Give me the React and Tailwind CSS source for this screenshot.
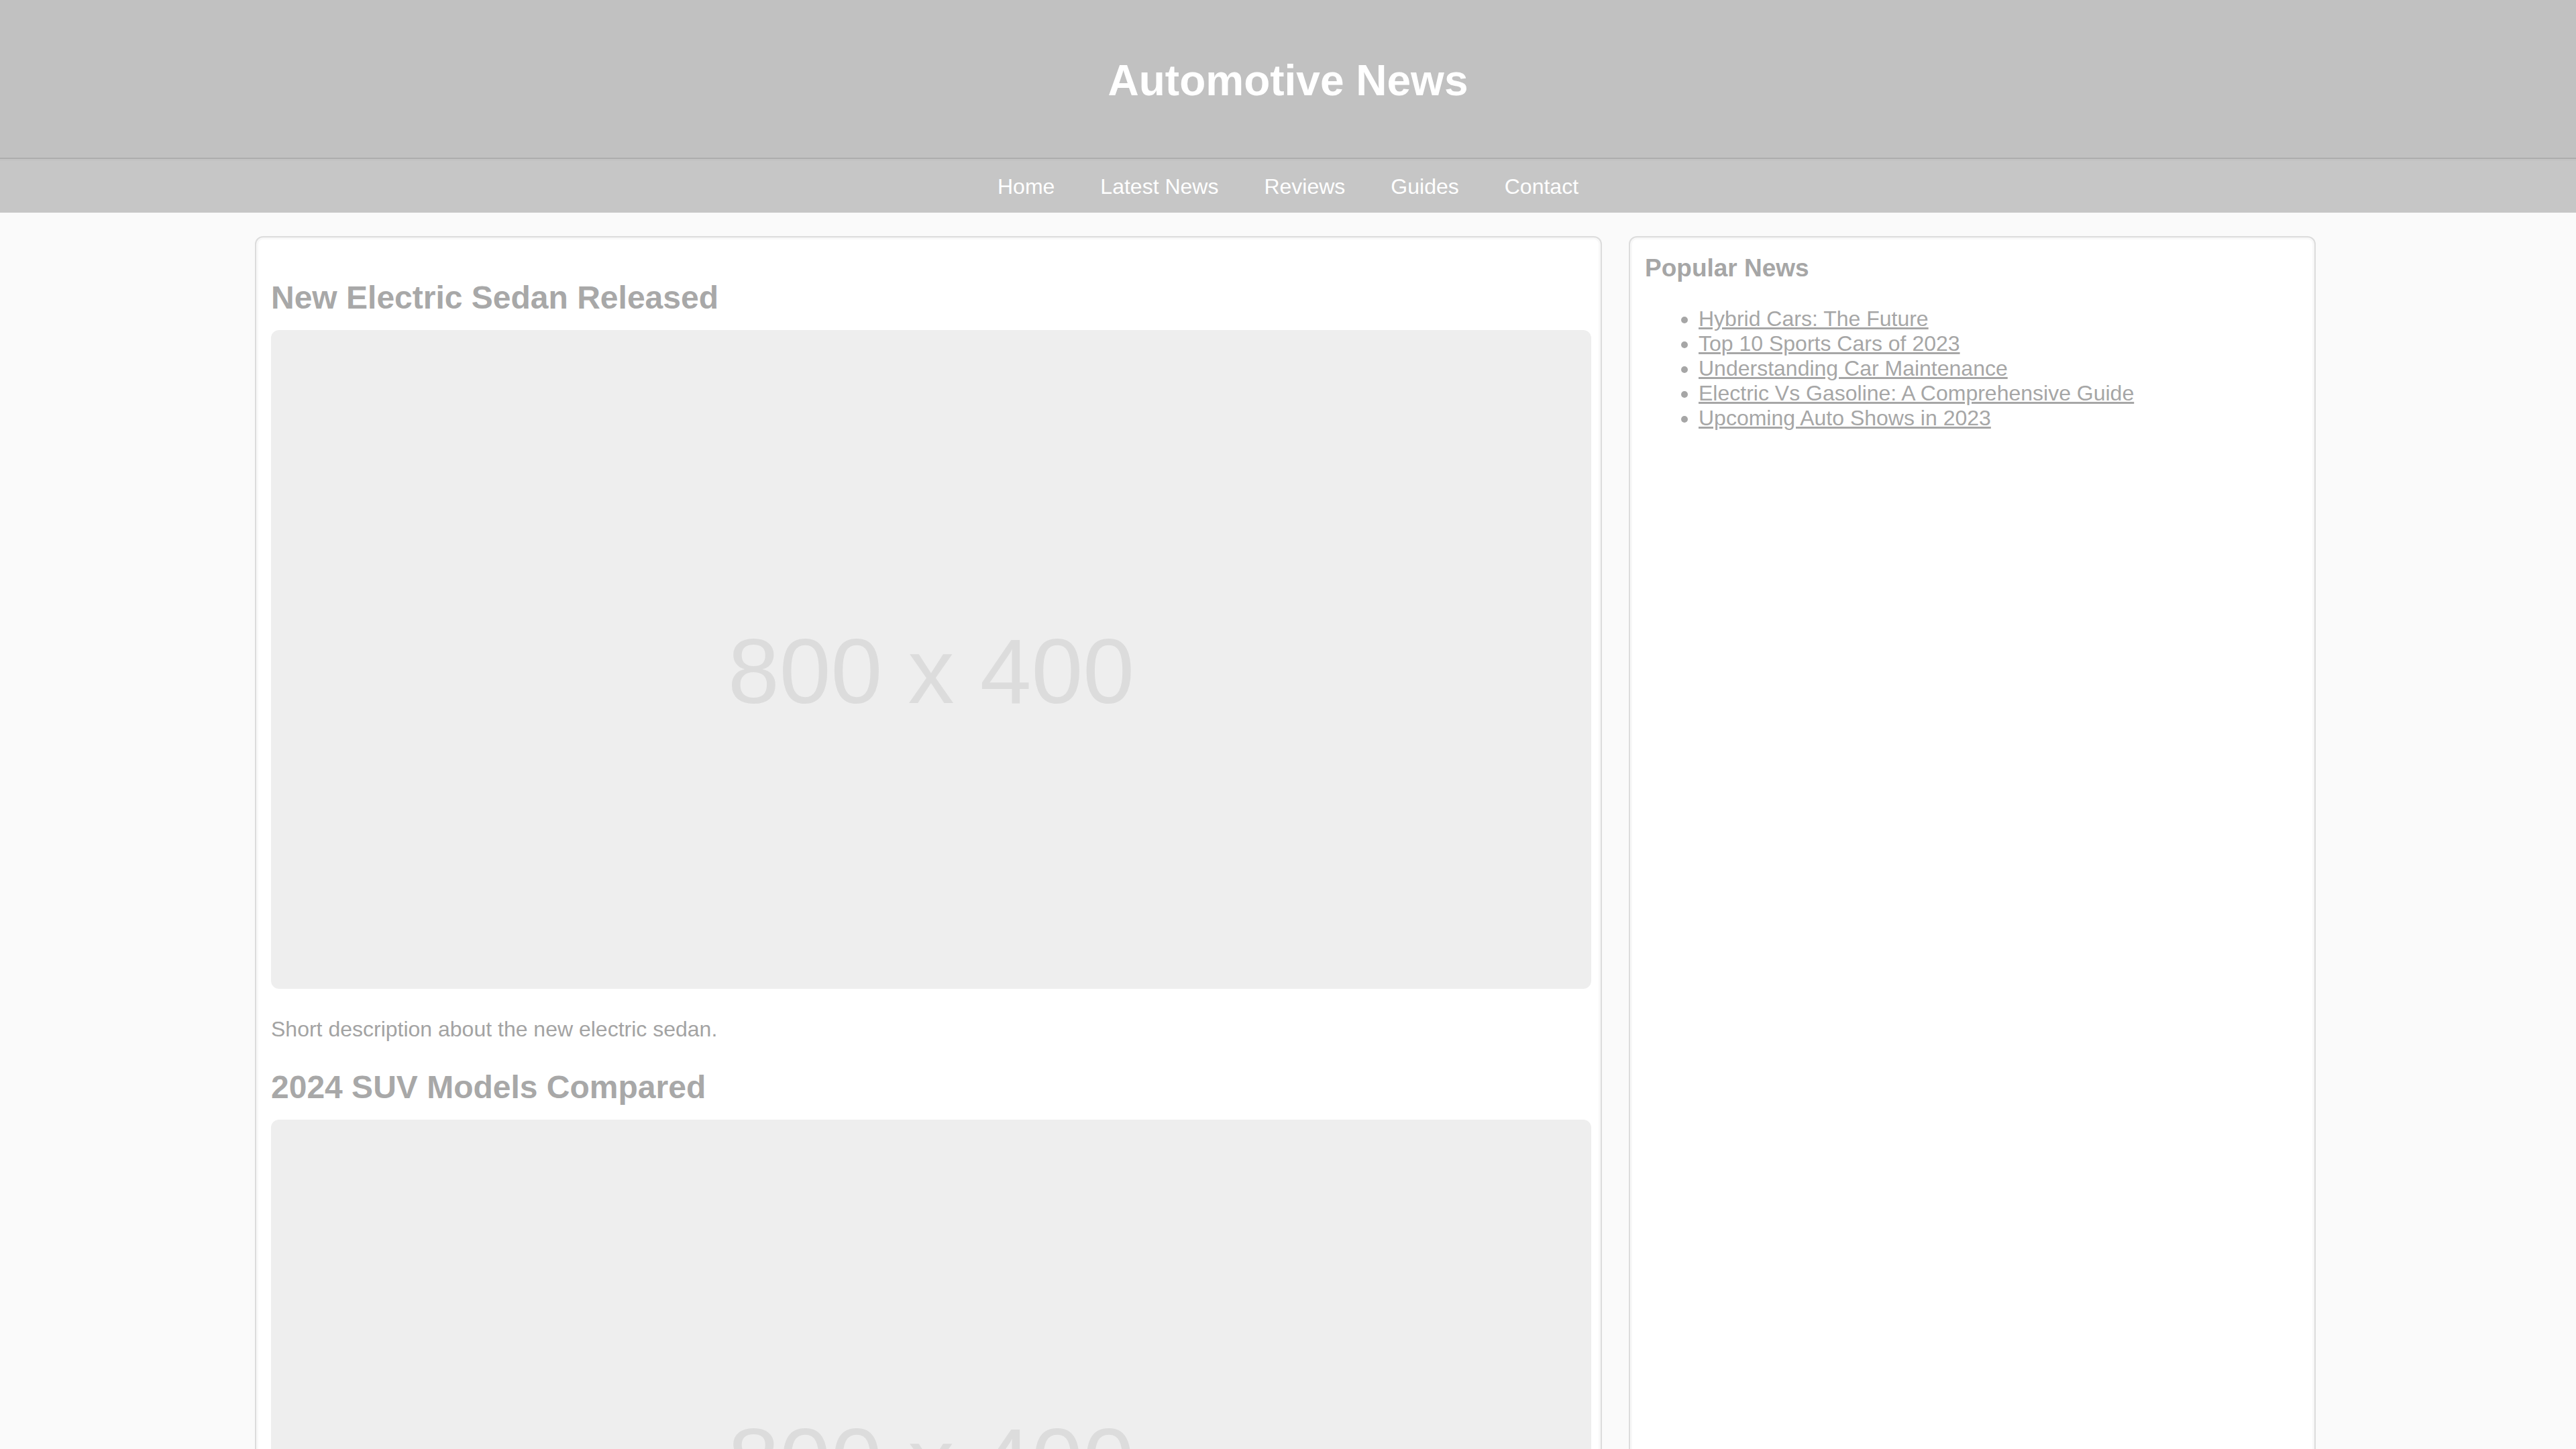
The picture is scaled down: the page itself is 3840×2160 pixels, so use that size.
import React from 'react';

const navItems = ['Home', 'Latest News', 'Reviews', 'Guides', 'Contact'];

const articles = [
  { title: 'New Electric Sedan Released', text: 'Short description about the new electric sedan.' },
  { title: '2024 SUV Models Compared', text: 'A quick comparison of the newest SUV models on the market.' },
];

const popular = [
  'Hybrid Cars: The Future',
  'Top 10 Sports Cars of 2023',
  'Understanding Car Maintenance',
  'Electric Vs Gasoline: A Comprehensive Guide',
  'Upcoming Auto Shows in 2023',
];

const Placeholder = () => (
  <div className="w-full h-[982px] bg-[#eeeeee] rounded-[12px] flex items-center justify-center">
    <span className="mt-[34px] text-[138px] leading-none text-[#dcdcdc]">800 x 400</span>
  </div>
);

export default function App() {
  return (
    <div className="min-h-screen bg-[#fafafa] font-['Liberation_Sans',Arial,sans-serif]">
      {/* Header */}
      <header className="h-[237px] pt-[4px] bg-[#c1c1c1] border-b-2 border-[#adadad] flex items-center justify-center">
        <h1 className="text-[64px] leading-[74px] font-bold text-white">Automotive News</h1>
      </header>

      {/* Nav */}
      <nav className="h-[80px] bg-[#c6c6c6] border-t-[3px] border-[#c3c3c3] flex items-center justify-center gap-[68px]">
        {navItems.map((item) => (
          <a key={item} href="#" className="text-[32px] leading-[37px] text-white">
            {item}
          </a>
        ))}
      </nav>

      {/* Main */}
      <main className="mx-auto w-[3080px] pr-[8px] mt-[35px] flex items-stretch gap-[40px]">
        <section className="w-[2008px] shrink-0 bg-white border-2 border-[#dcdcdc] rounded-[12px] shadow-[inset_0_0_0_3px_#f8f8f8] pl-[22px] pr-[14px] pt-[22px] pb-[40px]">
          {articles.map((a) => (
            <article key={a.title}>
              <h2 className="mt-[40px] mb-[20px] text-[48px] leading-[56px] font-bold text-[#a8a8a8]">{a.title}</h2>
              <Placeholder />
              <p className="mt-[42px] text-[32px] leading-[37px] text-[#a3a3a3]">{a.text}</p>
            </article>
          ))}
        </section>

        <aside className="w-[1024px] shrink-0 bg-white border-2 border-[#dcdcdc] rounded-[12px] shadow-[inset_0_0_0_3px_#f8f8f8] px-[22px] pt-[24px]">
          <h3 className="text-[37px] leading-[43px] font-bold text-[#a6a6a6] mb-[36px]">Popular News</h3>
          <ul className="list-disc pl-[80px] text-[32px] leading-[37px] text-[#a6a6a6]">
            {popular.map((p) => (
              <li key={p}>
                <a href="#" className="underline">{p}</a>
              </li>
            ))}
          </ul>
        </aside>
      </main>
    </div>
  );
}
